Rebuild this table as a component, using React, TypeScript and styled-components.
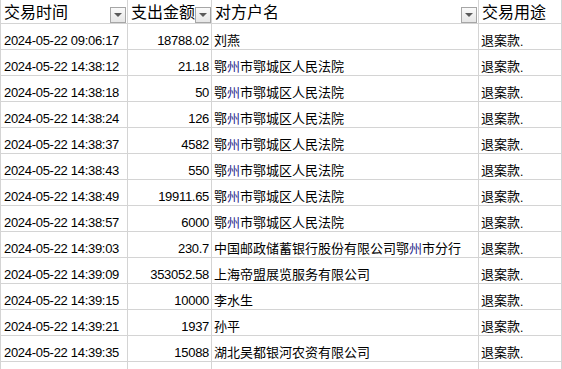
import { Fragment } from "react";
import styled, { createGlobalStyle } from "styled-components";

const GlobalStyle = createGlobalStyle`
  html, body {
    margin: 0;
    padding: 0;
    background: #ffffff;
  }
  body {
    font-family: "Liberation Sans", "Noto Sans CJK SC", sans-serif;
    color: #000000;
  }
`;

const Sheet = styled.div`
  display: grid;
  grid-template-columns: 127px 84px 267px 1fr;
  grid-auto-rows: 26px;
  grid-template-rows: 24px;
  width: 562px;
  height: 369px;
  overflow: hidden;
  border-left: 1px solid #d4d4d4;
  box-sizing: border-box;
`;

const HeaderCell = styled.div`
  display: flex;
  align-items: flex-end;
  justify-content: space-between;
  box-sizing: border-box;
  padding: 0 1px 0 3px;
  border-right: 1px solid #d4d4d4;
  border-bottom: 1px solid #d4d4d4;
  font-family: "Noto Sans CJK SC", "Liberation Sans", sans-serif;
  font-size: 16px;
  white-space: nowrap;
`;

const HeaderLabel = styled.span`
  align-self: flex-start;
  line-height: 22px;
`;

const FilterButton = styled.span`
  flex: none;
  display: flex;
  align-items: center;
  justify-content: center;
  width: 16px;
  height: 16px;
  box-sizing: border-box;
  border: 1px solid #a6a6a6;
  background: linear-gradient(#fafafa, #e6e6e6);
  &::after {
    content: "";
    width: 0;
    height: 0;
    border-left: 4px solid transparent;
    border-right: 4px solid transparent;
    border-top: 4px solid #5a5a5a;
  }
`;

const Cell = styled.div<{ $align?: "left" | "right"; $cjk?: boolean }>`
  display: flex;
  align-items: flex-end;
  justify-content: ${(p) => (p.$align === "right" ? "flex-end" : "flex-start")};
  box-sizing: border-box;
  padding: ${(p) =>
    p.$align === "right" ? "0 2px 1px 0" : p.$cjk ? "0 0 0 2px" : "0 0 1px 3px"};
  border-right: 1px solid #d4d4d4;
  border-bottom: 1px solid #d4d4d4;
  font-size: 13px;
  letter-spacing: ${(p) => (p.$cjk ? "0" : "-0.3px")};
  font-family: ${(p) =>
    p.$cjk
      ? `"Noto Sans CJK SC", "Liberation Sans", sans-serif`
      : `"Liberation Sans", "Noto Sans CJK SC", sans-serif`};
  line-height: ${(p) => (p.$cjk ? "19px" : "15px")};
  white-space: nowrap;
`;

const Tinted = styled.span`
  color: #24248a;
`;

const Dot = styled.span`
  position: relative;
  top: 1px;
  font-family: "Liberation Sans", sans-serif;
  font-size: 12px;
  line-height: 1;
`;

interface Row {
  time: string;
  amount: string;
  party: string;
}

const COURT = "鄂州市鄂城区人民法院";

const rows: Row[] = [
  { time: "2024-05-22 09:06:17", amount: "18788.02", party: "刘燕" },
  { time: "2024-05-22 14:38:12", amount: "21.18", party: COURT },
  { time: "2024-05-22 14:38:18", amount: "50", party: COURT },
  { time: "2024-05-22 14:38:24", amount: "126", party: COURT },
  { time: "2024-05-22 14:38:37", amount: "4582", party: COURT },
  { time: "2024-05-22 14:38:43", amount: "550", party: COURT },
  { time: "2024-05-22 14:38:49", amount: "19911.65", party: COURT },
  { time: "2024-05-22 14:38:57", amount: "6000", party: COURT },
  { time: "2024-05-22 14:39:03", amount: "230.7", party: "中国邮政储蓄银行股份有限公司鄂州市分行" },
  { time: "2024-05-22 14:39:09", amount: "353052.58", party: "上海帝盟展览服务有限公司" },
  { time: "2024-05-22 14:39:15", amount: "10000", party: "李水生" },
  { time: "2024-05-22 14:39:21", amount: "1937", party: "孙平" },
  { time: "2024-05-22 14:39:35", amount: "15088", party: "湖北吴都银河农资有限公司" },
];

// the "州" in 鄂州 comes out with a blue fringe in the screenshot
function PartyName({ name }: { name: string }) {
  const parts = name.split("州");
  return (
    <span>
      {parts.map((part, i) => (
        <Fragment key={i}>
          {part}
          {i < parts.length - 1 && <Tinted>州</Tinted>}
        </Fragment>
      ))}
    </span>
  );
}

const headers = [
  { label: "交易时间", filter: true },
  { label: "支出金额", filter: true },
  { label: "对方户名", filter: true },
  { label: "交易用途", filter: false },
];

export default function App() {
  return (
    <>
      <GlobalStyle />
      <Sheet>
        {headers.map((h) => (
          <HeaderCell key={h.label}>
            <HeaderLabel>{h.label}</HeaderLabel>
            {h.filter && <FilterButton />}
          </HeaderCell>
        ))}
        {rows.map((r) => (
          <Fragment key={r.time}>
            <Cell>{r.time}</Cell>
            <Cell $align="right">{r.amount}</Cell>
            <Cell $cjk>
              <PartyName name={r.party} />
            </Cell>
            <Cell $cjk>
              <span>
                退案款<Dot>.</Dot>
              </span>
            </Cell>
          </Fragment>
        ))}
        <Cell />
        <Cell $align="right" />
        <Cell $cjk />
        <Cell $cjk />
      </Sheet>
    </>
  );
}
